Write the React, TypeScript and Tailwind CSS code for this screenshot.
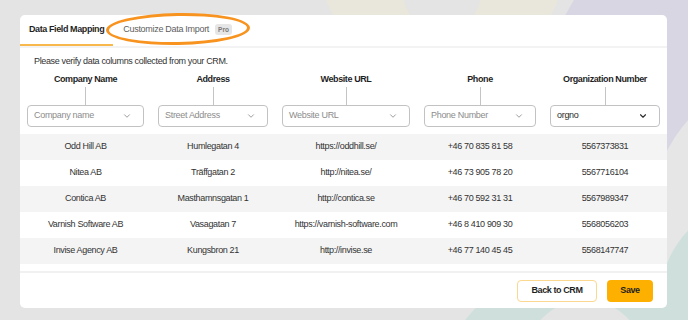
import React from "react";
import { ChevronDown } from "lucide-react";

const columns = [
  { header: "Company Name", placeholder: "Company name", value: "" },
  { header: "Address", placeholder: "Street Address", value: "" },
  { header: "Website URL", placeholder: "Website URL", value: "" },
  { header: "Phone", placeholder: "Phone Number", value: "" },
  { header: "Organization Number", placeholder: "", value: "orgno" },
];

const rows = [
  ["Odd Hill AB", "Humlegatan 4", "https://oddhill.se/", "+46 70 835 81 58", "5567373831"],
  ["Nitea AB", "Träffgatan 2", "http://nitea.se/", "+46 73 905 78 20", "5567716104"],
  ["Contica AB", "Masthamnsgatan 1", "http://contica.se", "+46 70 592 31 31", "5567989347"],
  ["Varnish Software AB", "Vasagatan 7", "https://varnish-software.com", "+46 8 410 909 30", "5568056203"],
  ["Invise Agency AB", "Kungsbron 21", "http://invise.se", "+46 77 140 45 45", "5568147747"],
];

const grid = "grid grid-cols-[131px_124px_142px_126px_124px]";

export default function App() {
  return (
    <div className="relative w-[688px] h-[320px] overflow-hidden bg-[#e4e4e4] font-['Liberation_Sans',Arial,sans-serif] text-[#2b2b2b]">
      {/* decorative background */}
      <div className="absolute left-[319px] top-[-164px] w-[246px] h-[246px] rounded-full bg-[#e9e6dc]" />
      <div className="absolute left-[403px] top-[-47px] w-[78px] h-[78px] rounded-full bg-[#e4e4e4]" />
      <div className="absolute left-[540px] top-[-110px] w-[460px] h-[460px] rounded-full bg-[#d9d6e3]" />
      <div className="absolute left-[650px] top-[70px] w-[300px] h-[300px] rounded-full bg-[#e6e6e6]" />
      <div className="absolute left-[430px] top-[260px] w-[320px] h-[320px] rounded-full bg-[#cfe0dc]" />
      <div className="absolute left-[526px] top-[300px] w-[118px] h-[200px] rounded-full bg-[#e4e4e4]" />
      <div className="absolute left-[660px] top-[200px] w-[200px] h-[200px] rounded-full bg-[#cfe0dc]" />

      <div className="relative pl-[20px] pr-[21px] pt-[15px]">
        <div className="relative flex h-[293px] flex-col rounded-[5px] bg-white">
          {/* tabs */}
          <div className="flex h-[33px] items-start border-b-2 border-[#f3f3f3]">
            <div className="flex h-[31px] items-center border-b-2 border-[#f9b84c] px-[9px] text-[9px] font-bold tracking-[-0.4px] text-[#1f1f1f]">
              Data Field Mapping
            </div>
            <div className="flex h-[29px] items-center pl-[10px] text-[9px] tracking-[-0.3px] text-[#5e5e5e]">
              <span>Customize Data Import</span>
              <span className="ml-[6px] flex h-[11px] items-center rounded-[3px] bg-[#e6e6e6] px-[3px] text-[6.5px] font-bold tracking-normal text-[#7a7a7a]">
                Pro
              </span>
            </div>
          </div>
          {/* annotation ellipse */}
          <div className="pointer-events-none absolute left-[86px] top-[-2px] h-[32px] w-[144px] rounded-[50%] border-[3px] border-[#f7931e] -rotate-[1deg]" />

          <div className="pl-[14px] pt-[7px] text-[9px] leading-[12px] tracking-[-0.35px] text-[#333]">
            Please verify data columns collected from your CRM.
          </div>

          {/* headers + selects */}
          <div className={`${grid} mt-[6px]`}>
            {columns.map((c, i) => (
              <div key={i} className="flex flex-col items-center px-[7px]">
                <div className="text-[9px] leading-[12px] font-bold tracking-[-0.4px] text-[#1f1f1f] whitespace-nowrap">
                  {c.header}
                </div>
                <div className="mt-[2px] h-[18px] w-px bg-[#c4c4c4]" />
                <div className="flex h-[22px] w-full items-center justify-between rounded-[4px] border border-[#c2c2c2] pl-[6px] pr-[11px]">
                  {c.value ? (
                    <span className="text-[9px] tracking-[-0.3px] text-[#2b2b2b]">{c.value}</span>
                  ) : (
                    <span className="text-[9px] tracking-[-0.3px] text-[#8c8c8c]">{c.placeholder}</span>
                  )}
                  <ChevronDown
                    size={10}
                    strokeWidth={c.value ? 2.6 : 2}
                    className={c.value ? "text-[#2b2b2b]" : "text-[#8a8a8a]"}
                  />
                </div>
              </div>
            ))}
          </div>

          {/* rows */}
          <div className="mt-[7px] flex flex-col">
            {rows.map((r, i) => (
              <div
                key={i}
                className={`${grid} h-[26px] items-center ${i % 2 === 0 ? "bg-[#f4f4f4]" : "bg-white"}`}
              >
                {r.map((cell, j) => (
                  <div
                    key={j}
                    className="text-center text-[9px] tracking-[-0.35px] text-[#333] whitespace-nowrap"
                  >
                    {cell}
                  </div>
                ))}
              </div>
            ))}
          </div>

          <div className="mt-[7px] h-[2px] bg-[#f1f1f1]" />

          <div className="flex justify-end gap-[10px] pr-[14px] pt-[7px]">
            <button className="flex h-[22px] w-[80px] items-center justify-center rounded-[4px] border border-[#fbd88f] bg-white text-[9px] font-bold tracking-[-0.4px] text-[#1f1f1f]">
              Back to CRM
            </button>
            <button className="flex h-[22px] w-[46px] items-center justify-center rounded-[4px] bg-[#fdb000] text-[9px] font-bold tracking-[-0.4px] text-[#1f1f1f]">
              Save
            </button>
          </div>
        </div>
      </div>
    </div>
  );
}
